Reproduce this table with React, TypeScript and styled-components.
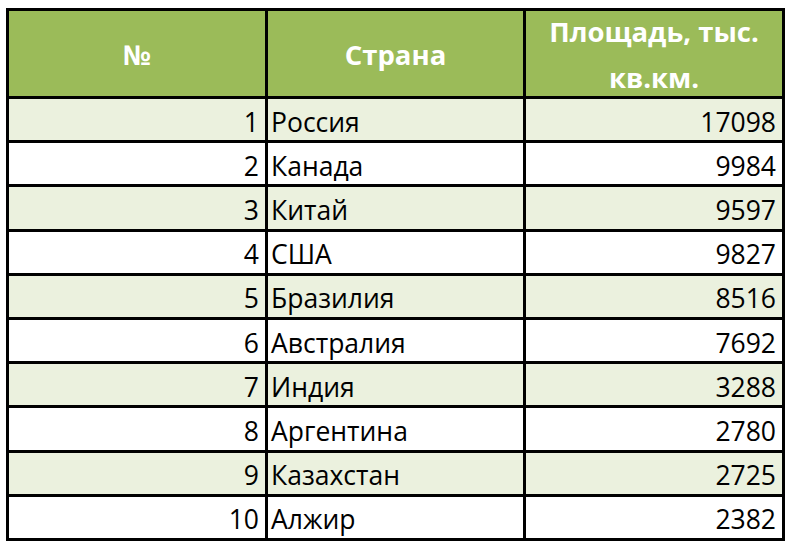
import React from "react";
import styled, { createGlobalStyle } from "styled-components";

const GlobalStyle = createGlobalStyle`
  html, body {
    margin: 0;
    padding: 0;
    background: #ffffff;
  }
`;

const Page = styled.div`
  padding: 8px 0 0 6px;
  font-family: "Open Sans", "Noto Sans", sans-serif;
`;

const Grid = styled.div`
  display: grid;
  grid-template-columns: 259px 258px 259px;
  grid-template-rows: 88px repeat(10, 44.2px);
  width: max-content;
  border-left: 3px solid #000;
  border-top: 3px solid #000;
`;

const HeadCell = styled.div`
  display: flex;
  flex-direction: column;
  align-items: center;
  justify-content: center;
  padding-top: 2px;
  background: #9bbb59;
  color: #ffffff;
  font-weight: 700;
  font-size: 27.5px;
  line-height: 46px;
  text-align: center;
  border-right: 3px solid #000;
  border-bottom: 3px solid #000;
  overflow: hidden;
`;

const Cell = styled.div<{ $align: "left" | "right"; $shaded: boolean }>`
  display: flex;
  align-items: center;
  justify-content: ${(p) => (p.$align === "right" ? "flex-end" : "flex-start")};
  padding: 4px ${(p) => (p.$align === "right" ? "6px" : "0")} 0
    ${(p) => (p.$align === "left" ? "3px" : "0")};
  background: ${(p) => (p.$shaded ? "#ebf1de" : "#ffffff")};
  color: #000;
  font-size: 26.5px;
  border-right: 3px solid #000;
  border-bottom: 3px solid #000;
  overflow: hidden;
  white-space: nowrap;
`;

const rows: [string, number][] = [
  ["Россия", 17098],
  ["Канада", 9984],
  ["Китай", 9597],
  ["США", 9827],
  ["Бразилия", 8516],
  ["Австралия", 7692],
  ["Индия", 3288],
  ["Аргентина", 2780],
  ["Казахстан", 2725],
  ["Алжир", 2382],
];

export default function App() {
  return (
    <Page>
      <GlobalStyle />
      <Grid>
        <HeadCell>№</HeadCell>
        <HeadCell>Страна</HeadCell>
        <HeadCell>
          <span>Площадь, тыс.</span>
          <span>кв.км.</span>
        </HeadCell>
        {rows.map(([name, area], i) => {
          const shaded = i % 2 === 0;
          return (
            <React.Fragment key={name}>
              <Cell $align="right" $shaded={shaded}>
                {i + 1}
              </Cell>
              <Cell $align="left" $shaded={shaded}>
                {name}
              </Cell>
              <Cell $align="right" $shaded={shaded}>
                {area}
              </Cell>
            </React.Fragment>
          );
        })}
      </Grid>
    </Page>
  );
}
